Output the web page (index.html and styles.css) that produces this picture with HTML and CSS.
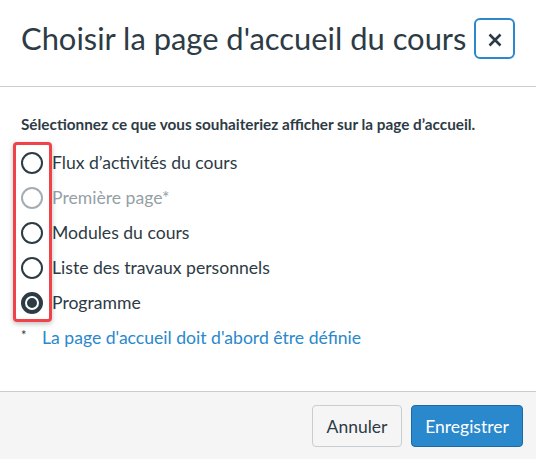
FILE: index.html
```html
<!DOCTYPE html>
<html lang="fr">
<head>
<meta charset="utf-8">
<title>Choisir la page d'accueil du cours</title>
<link rel="stylesheet" href="styles.css">
</head>
<body>
<div class="dialog">
  <header class="dlg-header">
    <h1 class="dlg-title">Choisir la page d'accueil du cours</h1>
    <button class="close-btn" aria-label="Fermer">
      <svg class="close-icon" width="14" height="14" viewBox="0 0 14 14"><path d="M1.5 1.5 L12.5 12.5 M12.5 1.5 L1.5 12.5" stroke="#2d3b45" stroke-width="2.6" stroke-linecap="butt"/></svg>
    </button>
  </header>
  <main class="dlg-body">
    <p class="intro">Sélectionnez ce que vous souhaiteriez afficher sur la page d’accueil.</p>
    <div class="options">
      <div class="highlight"></div>
      <label class="option"><span class="radio"></span><span class="opt-label">Flux d’activités du cours</span></label>
      <label class="option disabled"><span class="radio"></span><span class="opt-label">Première page*</span></label>
      <label class="option"><span class="radio"></span><span class="opt-label">Modules du cours</span></label>
      <label class="option"><span class="radio"></span><span class="opt-label">Liste des travaux personnels</span></label>
      <label class="option checked"><span class="radio"></span><span class="opt-label">Programme</span></label>
    </div>
    <p class="note"><span class="star">*</span><a class="note-link" href="#">La page d'accueil doit d'abord être définie</a></p>
  </main>
  <footer class="dlg-footer">
    <button class="btn btn-default">Annuler</button>
    <button class="btn btn-primary">Enregistrer</button>
  </footer>
</div>
</body>
</html>
```
FILE: styles.css
```css
html, body {
  margin: 0;
  padding: 0;
  background: #ffffff;
}
body {
  font-family: Lato, "Open Sans", sans-serif;
  color: #2d3b45;
}
.dialog {
  display: flex;
  flex-direction: column;
  height: 459px;
}
.dlg-header {
  display: flex;
  align-items: center;
  justify-content: space-between;
  padding: 18px 21px 27px 21px;
  border-bottom: 1px solid #c7cdd1;
}
.dlg-title {
  margin: 0;
  font-size: 30.9px;
  font-weight: 400;
  line-height: 41px;
  color: #2d3b45;
}
.close-btn {
  width: 41px;
  height: 41px;
  box-sizing: border-box;
  border: 2px solid #2b88cc;
  border-radius: 6px;
  background: #fff;
  display: flex;
  align-items: center;
  justify-content: center;
  padding: 0;
}
.close-icon {
  margin: 2px 0 0 1px;
}
.dlg-body {
  flex: 1;
  padding: 26px 21px 0 21px;
}
.intro {
  margin: 0;
  font-size: 15.3px;
  font-weight: 700;
  line-height: 22px;
}
.options {
  position: relative;
  margin-top: 10px;
  display: flex;
  flex-direction: column;
}
.option {
  display: flex;
  align-items: center;
  gap: 9px;
  height: 35px;
  font-size: 17.6px;
}
.radio {
  width: 22px;
  height: 22px;
  box-sizing: border-box;
  border: 2px solid #2d3b45;
  border-radius: 50%;
  background: #fff;
  position: relative;
  flex: none;
}
.option.disabled .radio {
  border-color: #a5adb3;
}
.option.disabled .opt-label {
  color: #959fa6;
}
.option.checked .radio {
  background: #2d3b45;
}
.option.checked .radio::after {
  content: "";
  position: absolute;
  left: 2px;
  top: 2px;
  width: 14px;
  height: 14px;
  box-sizing: border-box;
  border: 2.5px solid #fff;
  border-radius: 50%;
  background: #2d3b45;
}
.highlight {
  position: absolute;
  left: -8px;
  top: -3px;
  width: 39px;
  height: 180px;
  box-sizing: border-box;
  border: 3px solid #ef4249;
  border-radius: 4px;
  box-shadow: 0 2px 5px rgba(0,0,0,0.25);
  pointer-events: none;
}
.note {
  margin: 6px 0 0 0;
  font-size: 17.6px;
  line-height: 24px;
  display: flex;
  align-items: baseline;
}
.star {
  font-size: 13px;
  color: #2d3b45;
  width: 21px;
  position: relative;
  top: -4px;
}
.note-link {
  color: #2a88cc;
  text-decoration: none;
}
.dlg-footer {
  display: flex;
  justify-content: flex-end;
  gap: 9px;
  padding: 13px 13px 12px 13px;
  background: #f5f5f5;
  border-top: 1px solid #c7cdd1;
}
.btn {
  height: 42px;
  box-sizing: border-box;
  border-radius: 4px;
  font-family: Lato, sans-serif;
  font-size: 17.5px;
  padding: 0;
  cursor: pointer;
}
.btn-default {
  background: #f5f5f5;
  border: 1px solid #c7cdd1;
  color: #2d3b45;
  width: 90px;
}
.btn-primary {
  background: #2a88cc;
  border: 1px solid #1d6aa3;
  color: #fff;
  width: 112px;
}
```
